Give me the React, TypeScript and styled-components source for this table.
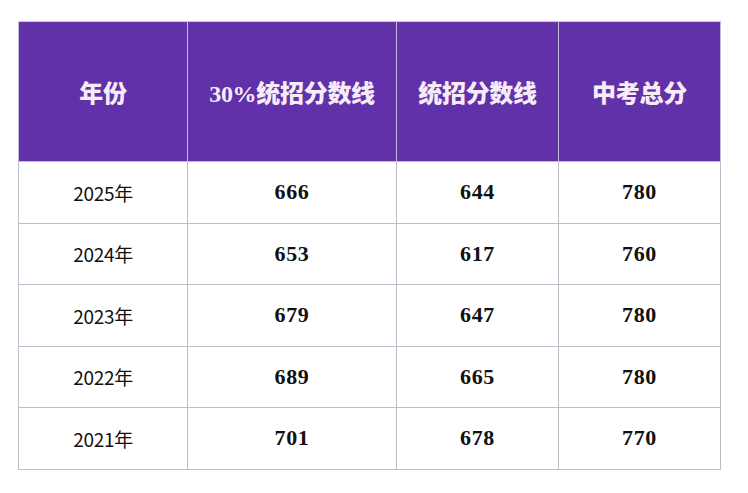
import styled, { createGlobalStyle } from 'styled-components'

/*---> Data <---*/
const headers = ['年份', '30%统招分数线', '统招分数线', '中考总分']

const rows = [
  { year: '2025年', top: '666', line: '644', total: '780' },
  { year: '2024年', top: '653', line: '617', total: '760' },
  { year: '2023年', top: '679', line: '647', total: '780' },
  { year: '2022年', top: '689', line: '665', total: '780' },
  { year: '2021年', top: '701', line: '678', total: '770' },
]

/*---> Component <---*/
export default function App() {
  return (
    <>
      <GlobalStyle />
      <Page>
        <Table>
          <colgroup>
            <col style={{ width: 169 }} />
            <col style={{ width: 209 }} />
            <col style={{ width: 162 }} />
            <col style={{ width: 162 }} />
          </colgroup>
          <thead>
            <tr>
              {headers.map((h) => (
                <HeadCell key={h}>{h}</HeadCell>
              ))}
            </tr>
          </thead>
          <tbody>
            {rows.map((r) => (
              <Row key={r.year}>
                <YearCell>{r.year}</YearCell>
                <NumCell>{r.top}</NumCell>
                <NumCell>{r.line}</NumCell>
                <NumCell>{r.total}</NumCell>
              </Row>
            ))}
          </tbody>
        </Table>
      </Page>
    </>
  )
}

/*---> Styles <---*/
const GlobalStyle = createGlobalStyle`
  html, body {
    margin: 0;
    padding: 0;
    background: #ffffff;
  }
`

const Page = styled.div`
  width: 748px;
  height: 493px;
  padding: 21px 0 0 18px;
  box-sizing: border-box;
`

const Table = styled.table`
  width: 703px;
  border-collapse: collapse;
  table-layout: fixed;
`

const HeadCell = styled.th`
  height: 139px;
  padding: 0;
  background: #6031a9;
  color: #f6ebf6;
  font-family: 'Liberation Serif', 'Noto Sans CJK SC', serif;
  font-size: 24px;
  font-weight: 900;
  text-align: center;
  letter-spacing: -0.3px;
  border: 1.5px solid #c3b8dc;
  border-top-color: #d6cbe6;
`

const Row = styled.tr`
  height: 61.5px;
`

const Cell = styled.td`
  padding: 0;
  text-align: center;
  color: #111111;
  border: 1.5px solid #b9bfc8;
`

const YearCell = styled(Cell)`
  font-family: 'Noto Sans CJK SC', 'Noto Sans', sans-serif;
  font-size: 19px;
  letter-spacing: -0.3px;
`

const NumCell = styled(Cell)`
  font-family: 'Liberation Serif', serif;
  font-size: 22px;
  font-weight: 700;
  letter-spacing: 0.6px;
`
